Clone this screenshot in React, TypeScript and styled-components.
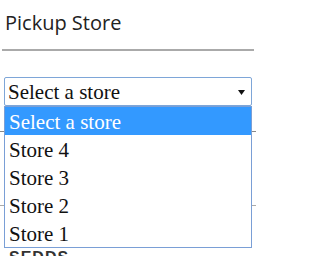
import * as React from 'react';
import styled, { createGlobalStyle } from 'styled-components';

const GlobalStyle = createGlobalStyle`
  html, body {
    margin: 0;
    padding: 0;
    background: #fff;
  }
`;

const Page = styled.div`
  width: 256px;
  font-family: 'Liberation Serif', serif;
`;

const Title = styled.h3`
  margin: 0;
  padding: 9px 0 0 5px;
  height: 39px;
  box-sizing: border-box;
  font-family: 'Open Sans', sans-serif;
  font-weight: 400;
  font-size: 20px;
  line-height: 27px;
  color: #222;
`;

const Rule = styled.hr`
  margin: 10px 2px 0 2px;
  border: 0;
  height: 2px;
  background: #aaa;
`;

const Field = styled.div`
  position: relative;
  margin: 26px 0 0 4px;
  width: 248px;
`;

const SelectBox = styled.div`
  box-sizing: border-box;
  height: 29px;
  border: 1px solid #7ea6d8;
  border-radius: 2px;
  display: flex;
  align-items: center;
  justify-content: space-between;
  padding: 1px 6px 0 3px;
  font-size: 21px;
  color: #111;
  background: #fff;
`;

const Arrow = styled.svg`
  width: 7px;
  height: 5px;
`;

const Menu = styled.ul`
  position: absolute;
  top: 29px;
  left: 0;
  right: 0;
  margin: 0;
  padding: 0;
  list-style: none;
  border: 1px solid #7a9fd6;
  background: #fff;
  z-index: 2;
`;

interface OptionProps {
  active?: boolean;
}

const Option = styled.li<OptionProps>`
  height: 28px;
  line-height: 30px;
  padding: 0 4px;
  font-size: 21px;
  color: ${(p) => (p.active ? '#fff' : '#111')};
  background: ${(p) => (p.active ? '#3399ff' : '#fff')};
`;

const Below = styled.div`
  display: flex;
  flex-direction: column;
`;

interface LineProps {
  tone?: string;
  offset: number;
}

const Line = styled.div<LineProps>`
  height: 1px;
  margin-top: ${(p) => p.offset}px;
  background: ${(p) => p.tone || '#aaa'};
`;

const Label = styled.div`
  margin: 43px 0 0 9px;
  font-family: 'Liberation Sans', sans-serif;
  font-weight: 700;
  font-size: 16px;
  line-height: 18px;
  color: #333;
  letter-spacing: 1px;
`;

const options = ['Select a store', 'Store 4', 'Store 3', 'Store 2', 'Store 1'];

export default function App() {
  return (
    <Page>
      <GlobalStyle />
      <Title>Pickup Store</Title>
      <Rule />
      <Field>
        <SelectBox>
          <span>Select a store</span>
          <Arrow viewBox="0 0 7 5">
            <path d="M0 0 H7 L3.5 5 Z" fill="#111" />
          </Arrow>
        </SelectBox>
        <Menu>
          {options.map((o, i) => (
            <Option key={o} active={i === 0}>
              {o}
            </Option>
          ))}
        </Menu>
      </Field>
      <Below>
        <Line tone="#888" offset={25} />
        <Line offset={73} />
        <Label>SEDDS</Label>
      </Below>
    </Page>
  );
}
